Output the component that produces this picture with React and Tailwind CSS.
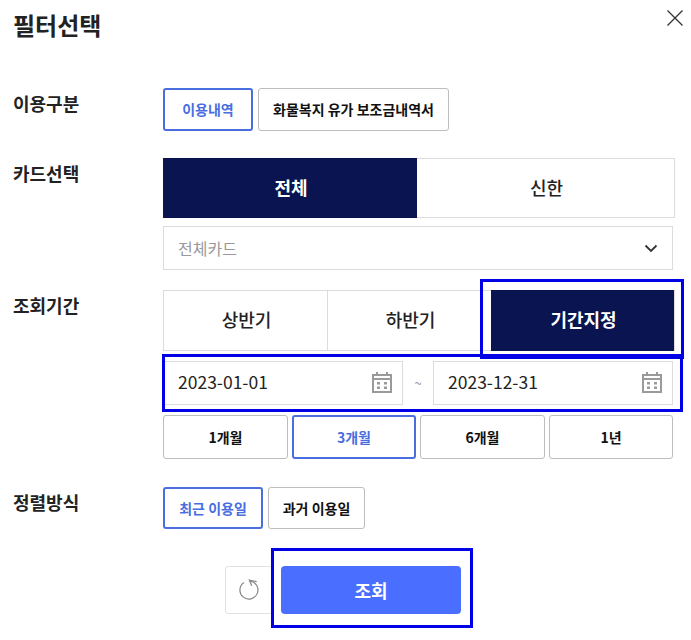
const font = { fontFamily: '"Noto Sans CJK KR", "Noto Sans", sans-serif' };

const CalendarIcon = () => (
  <svg width="22" height="22" viewBox="0 0 22 22" fill="#9a9a9a" className="shrink-0">
    <path d="M1 3h4V1h2v2h8V1h2v2h4v19H1V3zm2 6v11h16V9H3zm0-4v2h16V5H3z" />
    <rect x="6" y="11" width="3" height="2.5" />
    <rect x="13" y="11" width="3" height="2.5" />
    <rect x="6" y="15.5" width="3" height="2.5" />
    <rect x="13" y="15.5" width="3" height="2.5" />
  </svg>
);

const OptionButton = ({ active, className, children }) => (
  <button
    className={
      "flex items-center justify-center rounded-[3px] bg-white text-[14px] font-bold " +
      (active ? "border-2 border-[#4a6ee0] text-[#4a6ee0] " : "border border-[#bdbdbd] text-[#111] ") +
      className
    }
  >
    {children}
  </button>
);

const Tab = ({ active, className, children }) => (
  <div
    className={
      "flex items-center justify-center pb-[2px] pl-[2px] text-[18px] " +
      (active ? "bg-[#0a1450] font-bold text-white " : "bg-white font-medium text-[#222] ") +
      className
    }
  >
    {children}
  </div>
);

const DateInput = ({ value }) => (
  <div className="flex h-[44px] w-[240px] items-center justify-between border border-[#dcdcdc] pb-[2px] pl-[14px] pr-[9px] text-[17.5px] text-[#222]">
    <span>{value}</span>
    <CalendarIcon />
  </div>
);

const Label = ({ children }) => (
  <div className="w-[150px] shrink-0 text-[18px] font-bold leading-[24px] text-[#222]">{children}</div>
);

export default function App() {
  return (
    <div style={font} className="relative h-[640px] w-[691px] overflow-hidden bg-white pl-[13px]">
      {/* header */}
      <div className="flex h-[88px] items-start justify-between">
        <h1 className="mt-[7px] text-[24px] font-bold leading-[36px] text-[#222]">필터선택</h1>
        <svg width="18" height="18" viewBox="0 0 18 18" stroke="#333" strokeWidth="1.3" fill="none" className="mr-[7px] mt-[9px]">
          <path d="M1.5 1.5l15 15M16.5 1.5l-15 15" />
        </svg>
      </div>

      {/* 이용구분 */}
      <div className="flex">
        <div className="pt-[3px]">
          <Label>이용구분</Label>
        </div>
        <div className="flex h-[43px] gap-[5px]">
          <OptionButton active className="w-[90px]">이용내역</OptionButton>
          <OptionButton className="w-[191px]">화물복지 유가 보조금내역서</OptionButton>
        </div>
      </div>

      {/* 카드선택 */}
      <div className="mt-[27px] flex">
        <div className="pt-[3px]">
          <Label>카드선택</Label>
        </div>
        <div className="w-[512px]">
          <div className="flex h-[60px] border border-l-0 border-[#dcdcdc]">
            <Tab active className="-my-px w-[254px]">전체</Tab>
            <Tab className="flex-1">신한</Tab>
          </div>
          <div className="mt-[8px] flex h-[44px] w-[510px] items-center justify-between border border-[#dcdcdc] px-[14px] pb-[1px] text-[16px] text-[#999]">
            <span>전체카드</span>
            <svg width="14" height="14" viewBox="0 0 14 14" fill="none" stroke="#333" strokeWidth="1.8">
              <path d="M1.5 4.5L7 10l5.5-5.5" />
            </svg>
          </div>
        </div>
      </div>

      {/* 조회기간 */}
      <div className="mt-[20px] flex">
        <div className="pt-[3px]">
          <Label>조회기간</Label>
        </div>
        <div className="w-[512px]">
          <div className="flex h-[61px] border border-[#dcdcdc]">
            <Tab className="w-[164px] border-r border-[#dcdcdc]">상반기</Tab>
            <Tab className="w-[163px]">하반기</Tab>
            <Tab active className="-my-px flex-1">기간지정</Tab>
          </div>
          <div className="mt-[10px] flex w-[510px] items-center justify-between">
            <DateInput value="2023-01-01" />
            <span className="text-[13px] text-[#999]">~</span>
            <DateInput value="2023-12-31" />
          </div>
          <div className="mt-[10px] flex h-[44px] w-[510px] gap-[4px]">
            <OptionButton className="w-[125px]">1개월</OptionButton>
            <OptionButton active className="w-[124px]">3개월</OptionButton>
            <OptionButton className="w-[125px]">6개월</OptionButton>
            <OptionButton className="w-[124px]">1년</OptionButton>
          </div>
        </div>
      </div>

      {/* 정렬방식 */}
      <div className="mt-[28px] flex">
        <div className="pt-[3px]">
          <Label>정렬방식</Label>
        </div>
        <div className="flex h-[42px] gap-[5px]">
          <OptionButton active className="w-[100px]">최근 이용일</OptionButton>
          <OptionButton className="w-[97px]">과거 이용일</OptionButton>
        </div>
      </div>

      {/* footer buttons */}
      <div className="mt-[37px] flex h-[48px] pl-[212px]">
        <button className="flex w-[48px] items-center justify-center rounded-[3px] border border-[#e2e2e2] bg-white">
          <svg width="22" height="24" viewBox="0 0 22 24" fill="none" stroke="#888" strokeWidth="1.2">
            <path d="M12 3.1A9 9 0 1 1 6 4.5" />
            <path d="M18.7 3.7L11.3 2l2.4 5.7" />
          </svg>
        </button>
        <button className="ml-[8px] h-[48px] w-[180px] rounded-[4px] bg-[#4a6eff] text-[18px] font-bold text-white">조회</button>
      </div>

      {/* blue highlight boxes */}
      <div className="absolute left-[480px] top-[279px] h-[80px] w-[204px] border-[3px] border-[#0000e6]" />
      <div className="absolute left-[162px] top-[354px] h-[58px] w-[521px] border-[3px] border-[#0000e6]" />
      <div className="absolute left-[271px] top-[548px] h-[80px] w-[202px] border-[3px] border-[#0000e6]" />
    </div>
  );
}
